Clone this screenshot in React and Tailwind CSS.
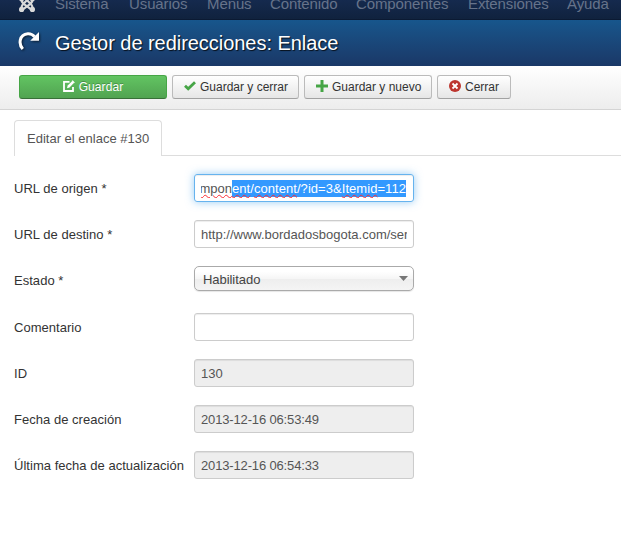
import React from "react";

const menu = [
  { label: "Sistema", width: "w-[74px]" },
  { label: "Usuarios", width: "w-[78px]" },
  { label: "Menus", width: "w-[63px]" },
  { label: "Contenido", width: "w-[86px]" },
  { label: "Componentes", width: "w-[112px]" },
  { label: "Extensiones", width: "w-[99px]" },
  { label: "Ayuda", width: "w-[50px]" },
];

const inputBase =
  "flex h-7 w-[220px] items-center rounded-[3px] border px-1.5 pt-0.5 text-[13px] text-[#555]";

const misspelled =
  "underline decoration-red-500 decoration-wavy decoration-1 underline-offset-1";

function JoomlaIcon() {
  return (
    <svg width="16" height="16" viewBox="0 0 16 16" fill="none" stroke="#d9d9d9">
      <g strokeWidth="2.2">
        <path d="M2.5 4C2.5 7 5 8 12.5 13.6" />
        <path d="M13.5 4C13.5 7 11 8 3.5 13.6" />
        <path d="M2.6 13C1.9 9.5 4.5 7.5 9.5 3" />
        <path d="M13.4 13C14.1 9.5 11.5 7.5 6.5 3" />
      </g>
      <g fill="#d9d9d9" stroke="none">
        <circle cx="2.6" cy="2.8" r="2.6" />
        <circle cx="13.4" cy="2.8" r="2.6" />
        <circle cx="2.6" cy="13.4" r="2.6" />
        <circle cx="13.4" cy="13.4" r="2.6" />
      </g>
    </svg>
  );
}

function RedirectIcon() {
  return (
    <svg width="22" height="20" viewBox="0 0 22 20" className="drop-shadow-[1px_1px_1px_rgba(0,0,0,0.6)]">
      <path d="M4.8 18C0.4 13.4 1 3.4 9.8 2.7C13 2.5 15 3.8 16.6 5.7" fill="none" stroke="#fff" strokeWidth="3" />
      <path d="M21 1V9.8H12.2Z" fill="#fff" />
    </svg>
  );
}

function EditIcon() {
  return (
    <svg width="12" height="12" viewBox="0 0 12 12" fill="none" stroke="#fff">
      <path d="M6.5 1.8H1V11H10V7" strokeWidth="1.8" />
      <path d="M4 8.2L4.7 5.5L9.3 .9L11.1 2.7L6.5 7.4Z" fill="#fff" stroke="none" />
      <path d="M9.2 .6L11.4 2.8" strokeWidth="1.2" />
    </svg>
  );
}

function CheckIcon() {
  return (
    <svg width="12" height="12" viewBox="0 0 12 12" className="-mt-0.5">
      <path d="M1 5.8L4.2 8.8L11 2.3" fill="none" stroke="#46a546" strokeWidth="2.8" />
    </svg>
  );
}

function PlusIcon() {
  return (
    <svg width="12" height="12" viewBox="0 0 12 12" className="-mt-0.5">
      <path d="M4.5 0H7.5V4.5H12V7.5H7.5V12H4.5V7.5H0V4.5H4.5Z" fill="#46a546" />
    </svg>
  );
}

function CancelIcon() {
  return (
    <svg width="12" height="12" viewBox="0 0 12 12" className="-mt-0.5">
      <circle cx="6" cy="6" r="6" fill="#bd362f" />
      <path d="M3.5 3.5L8.5 8.5M8.5 3.5L3.5 8.5" stroke="#fff" strokeWidth="1.8" />
    </svg>
  );
}

function ToolbarButton({ icon, label, className }) {
  return (
    <button
      className={`flex h-6 items-center rounded-[3px] border border-[#bbb] border-b-[#a2a2a2] bg-linear-to-b from-white to-[#e6e6e6] pl-[11px] text-[12px] whitespace-nowrap text-[#333] ${className}`}
    >
      {icon}
      <span className="ml-1">{label}</span>
    </button>
  );
}

function Field({ label, children }) {
  return (
    <div className="flex">
      <label className="w-[180px] pt-1.5 text-[13px] leading-[18px] tracking-[0.03px] whitespace-nowrap text-[#333]">
        {label}
      </label>
      {children}
    </div>
  );
}

export default function App() {
  return (
    <div className="h-[548px] w-[621px] overflow-hidden bg-white font-['Liberation_Sans',Arial,sans-serif]">
      <nav className="flex h-5 border-b border-[#0b1a33] bg-linear-to-b from-[#152a4e] to-[#10223e]">
        <div className="-mt-1 ml-[19px] w-9 shrink-0">
          <JoomlaIcon />
        </div>
        {menu.map((item) => (
          <a
            key={item.label}
            className={`-mt-[5px] shrink-0 text-[15px] leading-[18px] tracking-[-0.1px] text-[#66738a] ${item.width}`}
          >
            {item.label}
          </a>
        ))}
      </nav>

      <header className="flex h-[46px] bg-linear-to-b from-[#17568c] to-[#1a3867]">
        <div className="mt-[11px] ml-[18px] w-[37px]">
          <RedirectIcon />
        </div>
        <h1 className="mt-[5px] text-[20px] leading-9 tracking-[-0.04px] text-white [text-shadow:1px_1px_1px_rgba(0,0,0,0.8)]">
          Gestor de redirecciones: Enlace
        </h1>
      </header>

      <div className="flex h-11 gap-[5px] border-b border-[#d4d4d4] bg-linear-to-b from-white to-[#ededed] pt-[9px] pl-[19px]">
        <button className="flex h-6 w-[148px] items-center justify-center rounded-[3px] border border-[#46a546] border-b-[#387038] bg-linear-to-b from-[#62c462] to-[#51a351] text-[12px] tracking-[0.1px] text-white [text-shadow:0_-1px_0_rgba(0,0,0,0.25)]">
          <span className="-mt-0.5">
            <EditIcon />
          </span>
          <span className="ml-1">Guardar</span>
        </button>
        <ToolbarButton icon={<CheckIcon />} label="Guardar y cerrar" className="w-[127px]" />
        <ToolbarButton icon={<PlusIcon />} label="Guardar y nuevo" className="w-32" />
        <ToolbarButton icon={<CancelIcon />} label="Cerrar" className="w-[74px]" />
      </div>

      <div className="mt-[10px] flex h-9 items-stretch">
        <div className="w-3.5" />
        <div className="w-[148px] rounded-t-[4px] border border-b-0 border-[#ddd] pt-[9px] pl-3 text-[13px] leading-[18px] whitespace-nowrap text-[#555]">
          Editar el enlace #130
        </div>
        <div className="flex-1 border-b border-[#ddd]" />
      </div>

      <form className="mt-[18px] ml-3.5 flex flex-col gap-[18px]">
        <Field label="URL de origen *">
          <div className={`${inputBase} border-[#66b3ee] shadow-[inset_0_1px_1px_rgba(0,0,0,0.075),0_0_8px_rgba(82,168,236,0.6)]`}>
            <div className="flex h-[18px] w-[205px] items-start justify-end overflow-hidden leading-[17px] whitespace-nowrap">
              <span className={misspelled}>mpon</span>
              <span className="h-[17px] bg-[#3399ff] tracking-[0.05px] text-white">
                <span className={misspelled}>ent</span>/<span className={misspelled}>content</span>
                /?id=3&amp;<span className={misspelled}>Itemid</span>=112
              </span>
            </div>
          </div>
        </Field>
        <Field label="URL de destino *">
          <div className={`${inputBase} border-[#ccc] shadow-[inset_0_1px_1px_rgba(0,0,0,0.075)]`}>
            <div className="w-[206px] overflow-hidden whitespace-nowrap">http://www.bordadosbogota.com/servicios</div>
          </div>
        </Field>
        <Field label="Estado *">
          <div className="mb-1 flex h-[25px] w-[220px] items-center justify-between rounded-[5px] border border-[#aaa] bg-[linear-gradient(#fff_20%,#f6f6f6_50%,#eee_52%,#f4f4f4_100%)] pr-[5px] pl-2 text-[13px] text-[#444] shadow-[0_1px_1px_rgba(0,0,0,0.1)]">
            <span className="pt-0.5 tracking-[-0.05px]">Habilitado</span>
            <svg width="9" height="5" viewBox="0 0 9 5">
              <path d="M0 0H9L4.5 5Z" fill="#777" />
            </svg>
          </div>
        </Field>
        <Field label="Comentario">
          <div className={`${inputBase} border-[#ccc] shadow-[inset_0_1px_1px_rgba(0,0,0,0.075)]`} />
        </Field>
        <Field label="ID">
          <div className={`${inputBase} border-[#ccc] bg-[#eee] shadow-[inset_0_1px_1px_rgba(0,0,0,0.075)]`}>130</div>
        </Field>
        <Field label="Fecha de creación">
          <div className={`${inputBase} border-[#ccc] bg-[#eee] tracking-[-0.15px] shadow-[inset_0_1px_1px_rgba(0,0,0,0.075)]`}>2013-12-16 06:53:49</div>
        </Field>
        <Field label="Última fecha de actualización">
          <div className={`${inputBase} border-[#ccc] bg-[#eee] tracking-[-0.15px] shadow-[inset_0_1px_1px_rgba(0,0,0,0.075)]`}>2013-12-16 06:54:33</div>
        </Field>
      </form>
    </div>
  );
}
